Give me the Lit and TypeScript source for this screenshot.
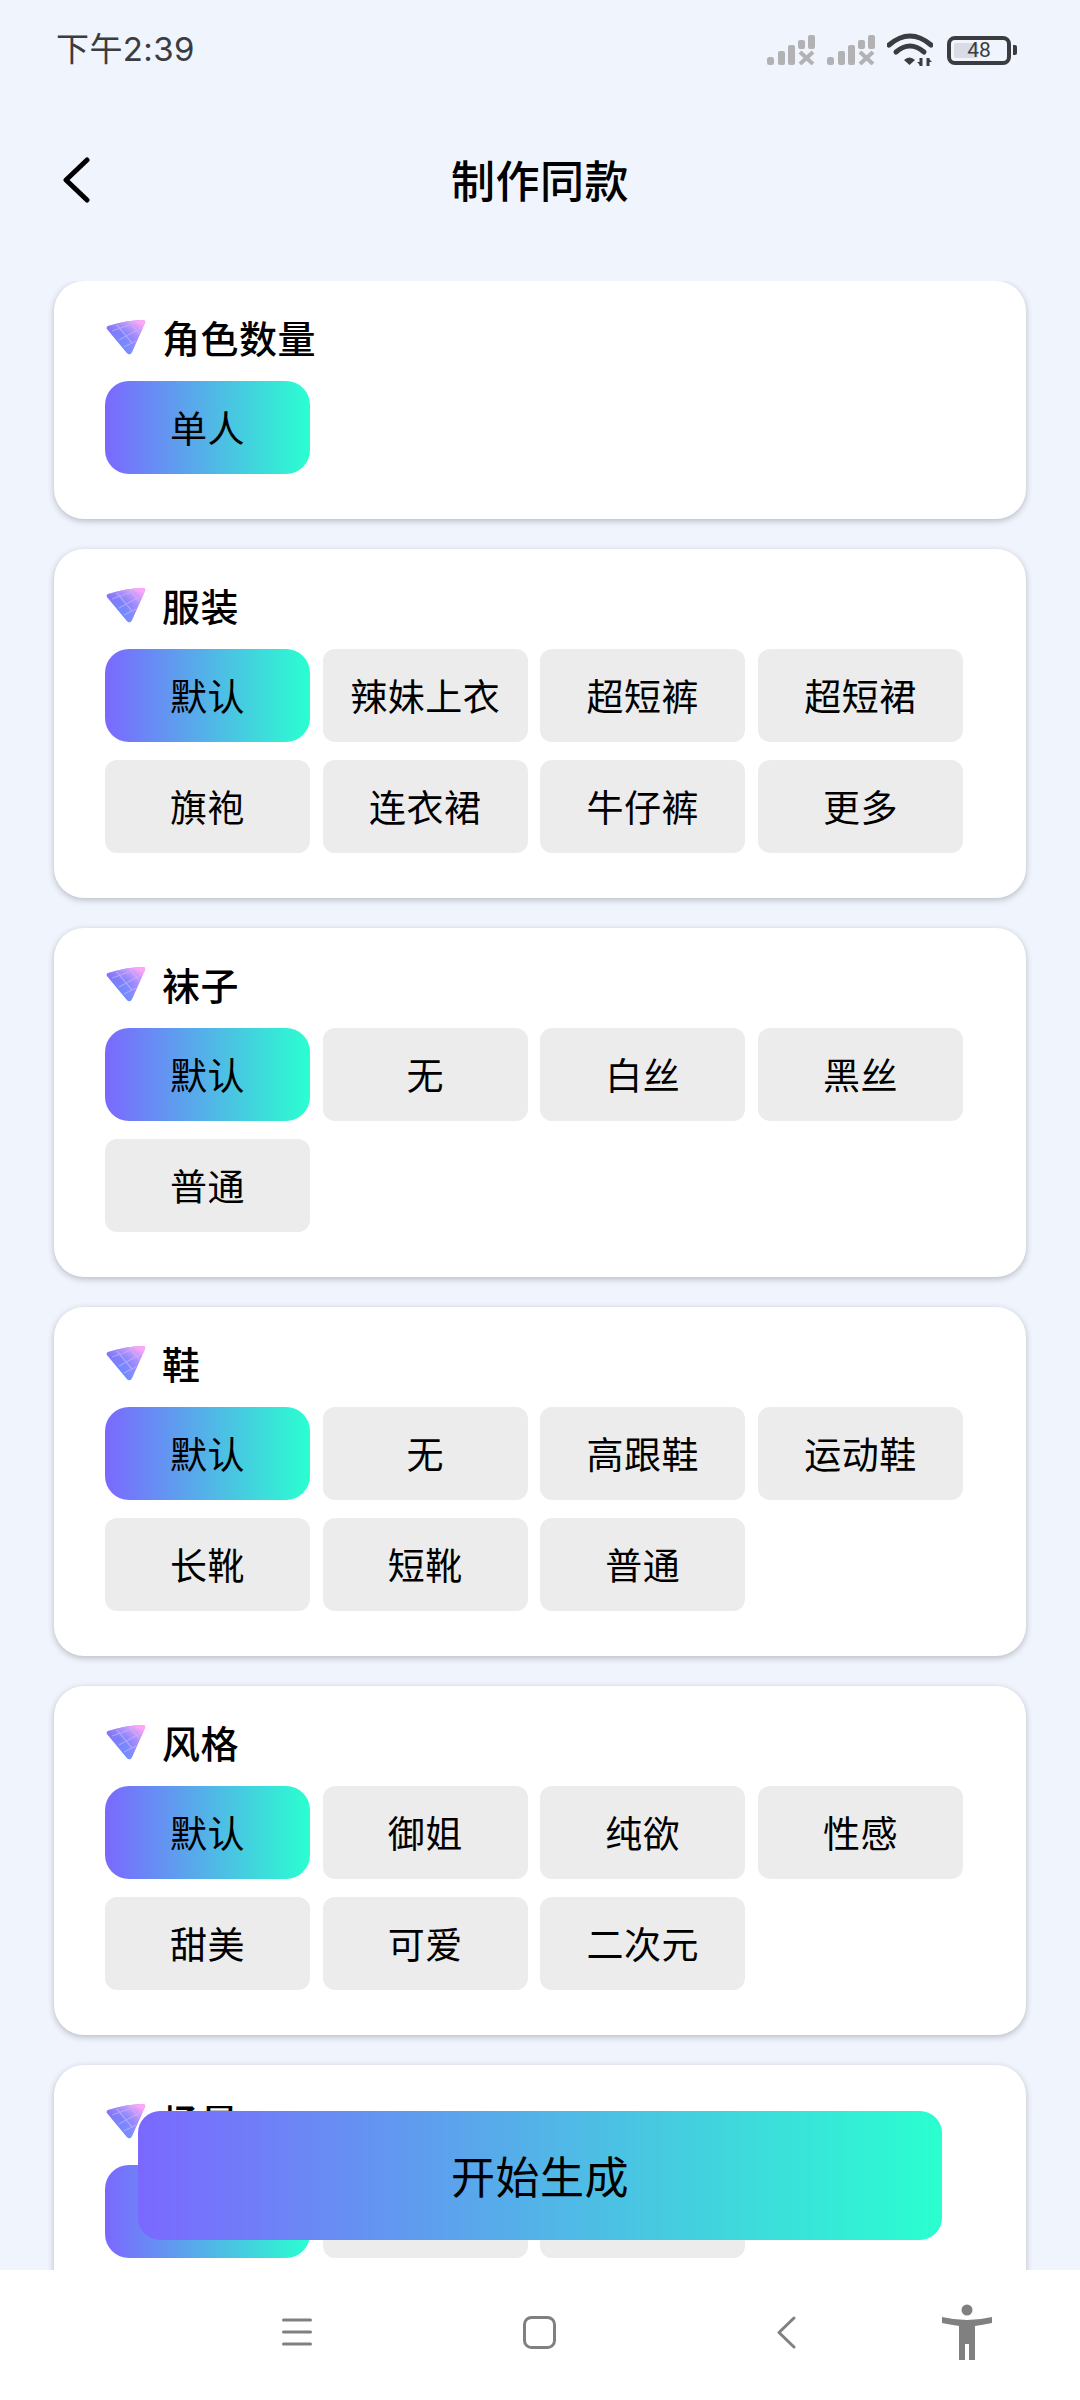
import { LitElement, css, html, svg } from "lit";
import { customElement } from "lit/decorators.js";

const SECTIONS = [
  { title: "角色数量", chips: ["单人"] },
  { title: "服装", chips: ["默认", "辣妹上衣", "超短裤", "超短裙", "旗袍", "连衣裙", "牛仔裤", "更多"] },
  { title: "袜子", chips: ["默认", "无", "白丝", "黑丝", "普通"] },
  { title: "鞋", chips: ["默认", "无", "高跟鞋", "运动鞋", "长靴", "短靴", "普通"] },
  { title: "风格", chips: ["默认", "御姐", "纯欲", "性感", "甜美", "可爱", "二次元"] },
  // the last two labels sit behind the start button
  { title: "场景", chips: ["默认", "", ""] },
];

let gemId = 0;

const signal = html`<svg class="signal" viewBox="0 0 48 30" fill="#b2b2b4">
  <rect x="0" y="22" width="7" height="8" rx="2.5"></rect>
  <rect x="11" y="16" width="7" height="14" rx="2"></rect>
  <rect x="21" y="10" width="7" height="20" rx="2"></rect>
  <rect x="31" y="5" width="7" height="9" rx="2"></rect>
  <rect x="41" y="0" width="7" height="14" rx="2"></rect>
  <path d="M33 17l13 12M46 17L33 29" stroke="#b2b2b4" stroke-width="4" fill="none"></path>
</svg>`;

const wifi = html`<svg class="wifi" viewBox="0 0 46 34" fill="none" stroke="#3a3c40">
  <path d="M2 12Q23 -6 44 12" stroke-width="5" stroke-linecap="round"></path>
  <path d="M9 19Q23 7 37 19" stroke-width="5" stroke-linecap="round"></path>
  <path d="M17 27L22.500 32L28 27Q22.500 22 17 27Z" fill="#3a3c40" stroke="none"></path>
  <path d="M34 25V33M41 25V33" stroke-width="3"></path>
  <path d="M30 29L34 33L34 29ZM41 25L45 29L41 29Z" fill="#3a3c40" stroke="none"></path>
</svg>`;

function gem() {
  const id = `gem${gemId++}`;
  return svg`<svg class="gem" viewBox="0 0 42 36">
    <defs>
      <linearGradient id="${id}" x1="0" y1="0.2" x2="1" y2="0.3">
        <stop offset="0" stop-color="#8e5cf0"></stop>
        <stop offset="0.5" stop-color="#7f7cfb"></stop>
        <stop offset="1" stop-color="#f090fa"></stop>
      </linearGradient>
      <linearGradient id="${id}t" x1="0.2" y1="1" x2="0.7" y2="0">
        <stop offset="0" stop-color="#5f96ff" stop-opacity="0.95"></stop>
        <stop offset="0.55" stop-color="#7a8cff" stop-opacity="0.5"></stop>
        <stop offset="1" stop-color="#ffa8f6" stop-opacity="0.95"></stop>
      </linearGradient>
    </defs>
    <path d="M3 7Q22 1 38 1Q41 1 40 4L27 33Q25 37 22 34L2 10Q1 8 3 7Z" fill="url(#${id})"></path>
    <path d="M3 7Q22 1 38 1Q41 1 40 4L27 33Q25 37 22 34L2 10Q1 8 3 7Z" fill="url(#${id}t)"></path>
    <path d="M12 6L27 24M24 3L34 14M7 12L24 6M14 21L36 9M19 28L31 22" stroke="#c9b8ff" stroke-width="1.200" opacity="0.6" fill="none"></path>
  </svg>`;
}

@customElement("app-root")
export class AppRoot extends LitElement {
  static styles = css`
    :host {
      display: flex;
      flex-direction: column;
      position: relative;
      width: 1080px;
      height: 2400px;
      overflow: hidden;
      background: #f0f4fc;
      color: #000;
      font-family: "Noto Sans CJK SC", "Noto Sans", sans-serif;
    }

    .status {
      display: flex;
      align-items: center;
      height: 100px;
      padding: 0 63px 0 56px;
      box-sizing: border-box;
      flex: none;
    }
    .time {
      font-family: "Inter", "Noto Sans CJK SC", sans-serif;
      font-size: 33px;
      letter-spacing: 0.4px;
      color: #3a3c40;
      line-height: 1;
      flex: 1;
      margin-top: -1px;
    }
    .signal {
      width: 48px;
      height: 30px;
      margin-right: 12px;
    }
    .wifi {
      width: 46px;
      height: 34px;
      margin-right: 14px;
    }
    .battery {
      display: flex;
      align-items: center;
      gap: 2px;
    }
    .battery-body {
      position: relative;
      width: 64px;
      height: 29px;
      box-sizing: border-box;
      border: 4px solid #3a3c40;
      border-radius: 8px;
      text-align: center;
      font-size: 21px;
      line-height: 21px;
      color: #3a3c40;
      font-family: "Roboto", sans-serif;
    }
    .battery-level {
      position: absolute;
      left: 3px;
      top: 3px;
      bottom: 3px;
      width: 24px;
      background: #d9dce6;
      border-radius: 2px;
    }
    .battery-text {
      position: relative;
    }
    .battery-nub {
      width: 4px;
      height: 10px;
      background: #3a3c40;
      border-radius: 0 2px 2px 0;
    }

    .bar {
      display: flex;
      align-items: center;
      justify-content: center;
      position: relative;
      height: 160px;
      flex: none;
      margin-bottom: 21px;
    }
    .back {
      position: absolute;
      left: 62px;
      top: 57px;
      width: 28px;
      height: 46px;
    }
    .bar h1 {
      margin: -3px 0 0;
      font-size: 44px;
      font-weight: 500;
      letter-spacing: 0.5px;
      line-height: 60px;
    }

    .scroll {
      flex: 1;
      min-height: 0;
      overflow: hidden;
      display: flex;
      flex-direction: column;
      gap: 30px;
      padding: 0 54px;
    }
    .card {
      flex: none;
      background: #fff;
      border-radius: 30px;
      box-shadow: 0 2px 6px rgba(60, 64, 80, 0.32);
      padding: 33px 63px 45px 51px;
    }
    .head {
      display: flex;
      align-items: center;
      gap: 15px;
      height: 44px;
      margin-bottom: 23px;
      font-size: 38px;
      font-weight: 500;
      letter-spacing: 0.5px;
    }
    .gem {
      width: 42px;
      height: 36px;
      flex: none;
      margin-top: 1px;
      filter: blur(0.5px);
    }
    .chips {
      display: grid;
      grid-template-columns: repeat(4, 1fr);
      column-gap: 12.5px;
      row-gap: 18px;
    }
    .chip {
      height: 93px;
      box-sizing: border-box;
      padding-bottom: 2px;
      display: flex;
      align-items: center;
      justify-content: center;
      background: #ececec;
      border-radius: 12px;
      font-size: 37px;
      letter-spacing: 0.5px;
      white-space: nowrap;
    }
    .chip.on {
      background: linear-gradient(90deg, #7b68ff, #2affd0);
      border-radius: 24px;
    }

    .start {
      position: absolute;
      left: 138px;
      top: 2111px;
      width: 804px;
      height: 129px;
      box-sizing: border-box;
      padding-bottom: 2px;
      display: flex;
      align-items: center;
      justify-content: center;
      background: linear-gradient(90deg, #7b68ff, #2affd0);
      border-radius: 22px;
      font-size: 44px;
      letter-spacing: 0.5px;
    }

    .nav {
      display: flex;
      align-items: center;
      flex: none;
      height: 130px;
      padding: 0 0 6px 282px;
      box-sizing: border-box;
      background: #fff;
      position: relative;
    }
    .nav svg {
      flex: none;
      display: block;
    }
    .menu {
      width: 30px;
      height: 28px;
    }
    .home {
      width: 33px;
      height: 33px;
      margin-left: 211px;
    }
    .prev {
      width: 19px;
      height: 33px;
      margin-left: 221px;
    }
    .person {
      width: 50px;
      height: 56px;
      margin-left: 146px;
    }
  `;

  render() {
    return html`
      <div class="status">
        <span class="time">下午2:39</span>
        ${signal} ${signal} ${wifi}
        <div class="battery">
          <div class="battery-body">
            <div class="battery-level"></div>
            <span class="battery-text">48</span>
          </div>
          <div class="battery-nub"></div>
        </div>
      </div>

      <div class="bar">
        <svg class="back" viewBox="0 0 28 46" fill="none">
          <path d="M25 3L4 23L25 43" stroke="#000" stroke-width="5" stroke-linecap="round" stroke-linejoin="round"></path>
        </svg>
        <h1>制作同款</h1>
      </div>

      <div class="scroll">
        ${SECTIONS.map(
          (s) => html`
            <section class="card">
              <div class="head">${gem()}<span>${s.title}</span></div>
              <div class="chips">
                ${s.chips.map((c, i) => html`<div class="chip ${i === 0 ? "on" : ""}">${c}</div>`)}
              </div>
            </section>
          `
        )}
      </div>

      <div class="nav">
        <svg class="menu" viewBox="0 0 30 28" stroke="#808080" stroke-width="3" stroke-linecap="round">
          <path d="M1.500 2H28.500M1.500 14H28.500M1.500 26H28.500"></path>
        </svg>
        <svg class="home" viewBox="0 0 33 33" fill="none" stroke="#808080" stroke-width="3">
          <rect x="1.500" y="1.500" width="30" height="30" rx="7"></rect>
        </svg>
        <svg class="prev" viewBox="0 0 19 33" fill="none" stroke="#808080" stroke-width="3" stroke-linecap="round" stroke-linejoin="round">
          <path d="M17 2L2 16.500L17 31"></path>
        </svg>
        <svg class="person" viewBox="0 0 50 56" fill="#808080">
          <circle cx="25" cy="6" r="5.500"></circle>
          <path d="M0 13Q25 19 50 13L50 19Q40 21 33 22L33 56H27V40H23V56H17V22Q10 21 0 19Z"></path>
        </svg>
      </div>

      <div class="start">开始生成</div>
    `;
  }
}
